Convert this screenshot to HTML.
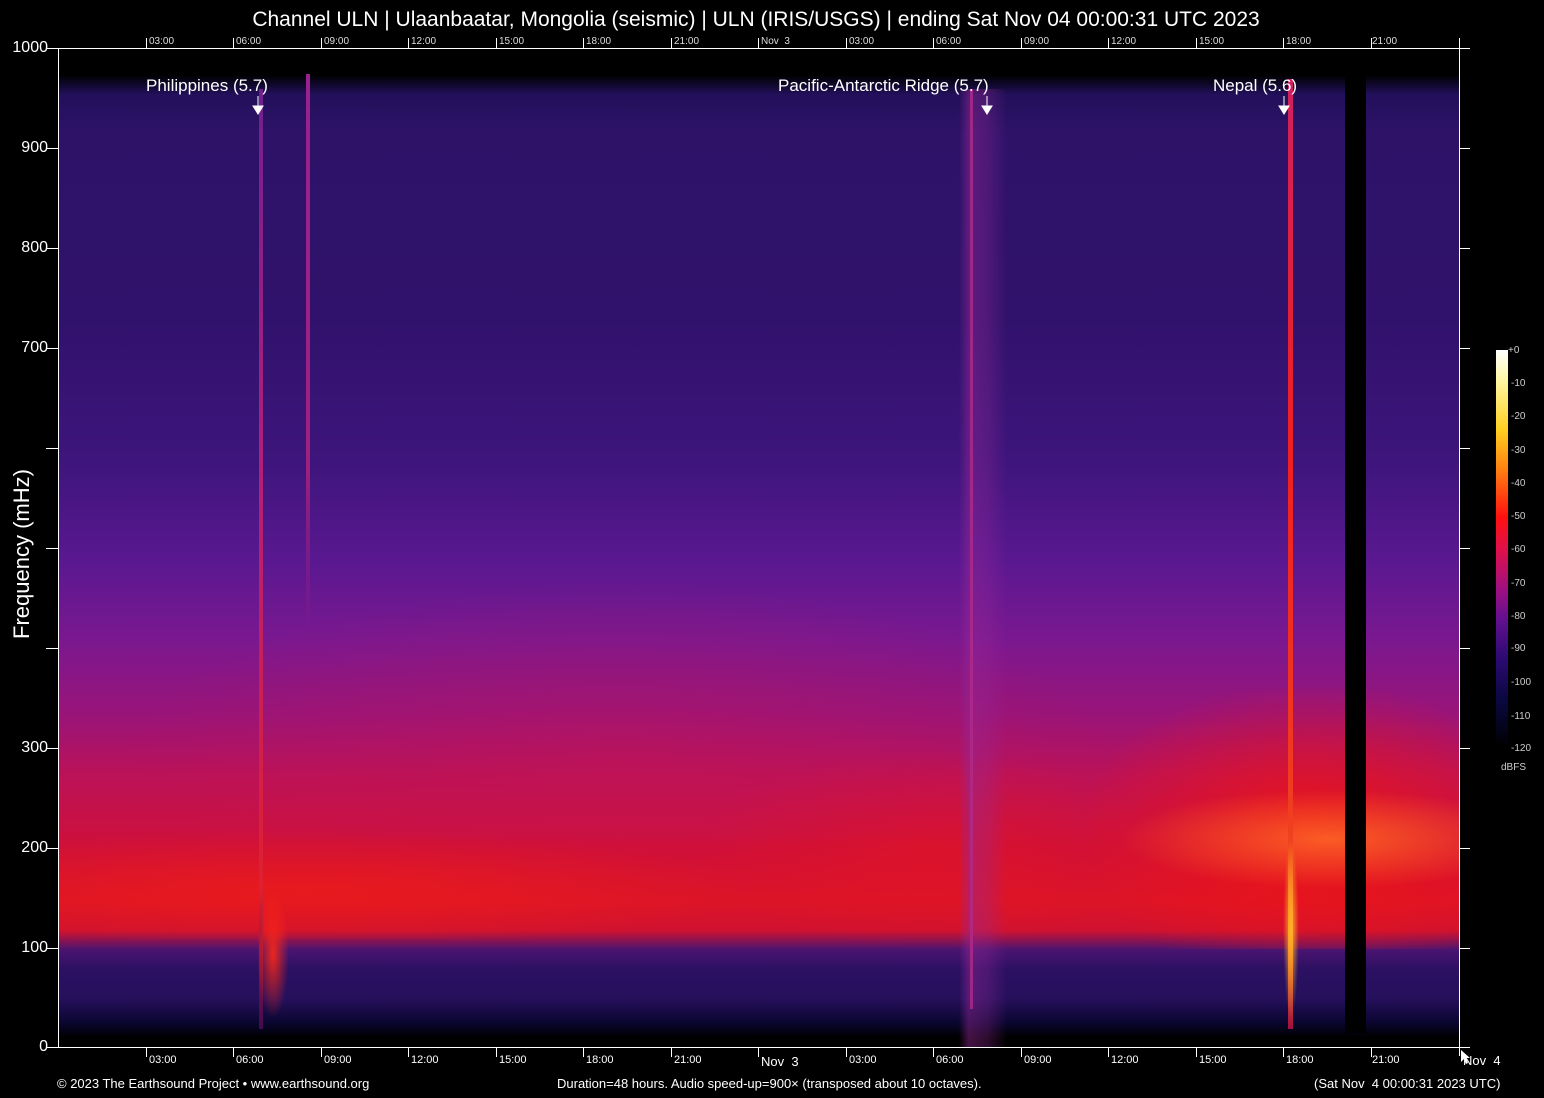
<!DOCTYPE html><html><head><meta charset="utf-8"><style>
body{margin:0;width:1544px;height:1098px;background:#000;position:relative;overflow:hidden;font-family:"Liberation Sans",sans-serif;color:#fff}
.a{position:absolute}
#plot{left:59px;top:49px;width:1400px;height:998px;background:#000;overflow:hidden}
.l{position:absolute;background:#fff}
.t{position:absolute;font-size:10px;color:#ddd}
.y{position:absolute;font-size:15px;right:1496px;text-align:right}
.ann{position:absolute;font-size:17px;white-space:nowrap}
.cb{position:absolute;font-size:10px;color:#ccc;left:1511px}
</style></head><body>
<div class="a" style="left:0;width:1512px;top:8px;text-align:center;font-size:21px;white-space:nowrap">Channel ULN | Ulaanbaatar, Mongolia (seismic) | ULN (IRIS/USGS) | ending Sat Nov 04 00:00:31 UTC 2023</div>
<div id="plot" class="a">
 <div class="a" style="left:0;top:26px;width:1400px;height:972px;background:linear-gradient(#000 0,#22105a 2%,#2e1268 6%,#30126c 25%,#3e157c 40%,#5a1890 50%,#7a1890 58%,#9a1478 66%,#bb1258 72%,#d01038 80%,#dc1428 85%,#d01230 88%,#4a1470 90%,#2c1062 92%,#26105c 95%,#0a0630 97.5%,#000 99%)"></div>
 <div class="a" style="left:0;top:780px;width:700px;height:110px;background:radial-gradient(ellipse at 35% 55%,rgba(240,30,20,.6),rgba(230,20,30,0) 70%)"></div>
 <div class="a" style="left:640px;top:700px;width:460px;height:200px;background:radial-gradient(ellipse at 50% 50%,rgba(230,20,30,.5),rgba(230,20,30,0) 70%)"></div>
 <div class="a" style="left:1030px;top:640px;width:370px;height:260px;background:radial-gradient(ellipse at 60% 55%,rgba(238,20,20,.9),rgba(230,20,30,0) 75%)"></div>
 <div class="a" style="left:1060px;top:740px;width:350px;height:100px;background:radial-gradient(ellipse at 60% 50%,rgba(255,110,40,.8),rgba(250,60,30,0) 70%)"></div>
 <div class="a" style="left:60px;top:530px;width:1000px;height:260px;background:radial-gradient(ellipse at 50% 70%,rgba(200,20,80,.35),rgba(200,20,80,0) 70%)"></div>
 <!-- streaks -->
 <div class="a" style="left:200px;top:40px;width:4px;height:940px;background:linear-gradient(#702090,#b0207a 40%,#e02030 85%,#400a50)"></div>
 <div class="a" style="left:198px;top:840px;width:32px;height:130px;background:radial-gradient(ellipse,rgba(255,40,20,.9),rgba(255,30,30,0) 70%)"></div>
 <div class="a" style="left:247px;top:25px;width:4px;height:560px;background:linear-gradient(#9a2090,#a02080 70%,rgba(150,30,120,0))"></div>
 <div class="a" style="left:900px;top:40px;width:48px;height:958px;background:linear-gradient(90deg,rgba(140,40,150,0),rgba(150,40,150,.45) 20%,rgba(150,40,150,.3) 60%,rgba(140,40,150,0));"></div>
 <div class="a" style="left:911px;top:40px;width:3px;height:920px;background:#b02a8a;opacity:.8"></div>
 <div class="a" style="left:1229px;top:30px;width:5px;height:950px;background:linear-gradient(#d02060,#f02020 40%,#f04020 80%,#ff9020 90%,#a01040)"></div>
 <div class="a" style="left:1224px;top:790px;width:16px;height:180px;background:radial-gradient(ellipse,rgba(255,180,40,.9),rgba(255,60,30,0) 70%)"></div>
 <div class="a" style="left:1286px;top:26px;width:21px;height:958px;background:#000"></div>
</div>
<!-- axes -->
<div class="l" style="left:58px;top:48px;width:1402px;height:1px"></div>
<div class="l" style="left:58px;top:1047px;width:1412px;height:1px"></div>
<div class="l" style="left:58px;top:48px;width:1px;height:1000px"></div>
<div class="l" style="left:1459px;top:38px;width:1px;height:1018px"></div>
<div id="ax"></div>
<div class="a" style="left:-78px;top:541px;width:200px;text-align:center;font-size:22px;white-space:nowrap;transform:rotate(-90deg)">Frequency (mHz)</div>
<div class="ann" style="left:146px;top:76px">Philippines (5.7)</div>
<div class="ann" style="left:778px;top:76px">Pacific-Antarctic Ridge (5.7)</div>
<div class="ann" style="left:1213px;top:76px">Nepal (5.6)</div>
<svg class="a" style="left:0;top:0" width="1544" height="1098"><g fill="#fff" stroke="#fff">
<line x1="258" y1="96" x2="258" y2="106"/><path d="M253 106h10l-5 8z"/>
<line x1="987" y1="96" x2="987" y2="106"/><path d="M982 106h10l-5 8z"/>
<line x1="1284" y1="96" x2="1284" y2="106"/><path d="M1279 106h10l-5 8z"/>
<path d="M1461 1050v12l3-3 2 5 2-1-2-5h4z" stroke="none"/></g></svg>
<div class="a" style="left:1496px;top:350px;width:12px;height:398px;background:linear-gradient(#fff 0%,#fff6a0 8%,#ffd020 20%,#ff8010 30%,#ff1010 42%,#e0104a 50%,#a01080 60%,#601090 68%,#2a0a70 78%,#0a0840 88%,#000 100%)"></div>
<div class="cb" style="top:345px;left:1508px">+0</div><div class="cb" style="top:378px">-10</div><div class="cb" style="top:411px">-20</div><div class="cb" style="top:445px">-30</div><div class="cb" style="top:478px">-40</div><div class="cb" style="top:511px">-50</div><div class="cb" style="top:544px">-60</div><div class="cb" style="top:578px">-70</div><div class="cb" style="top:611px">-80</div><div class="cb" style="top:643px">-90</div><div class="cb" style="top:677px">-100</div><div class="cb" style="top:711px">-110</div><div class="cb" style="top:743px">-120</div>
<div class="cb" style="top:762px;left:1501px">dBFS</div>
<div class="a" style="left:57px;top:1076px;font-size:13px;white-space:pre">© 2023 The Earthsound Project • www.earthsound.org</div>
<div class="a" style="left:557px;top:1076px;font-size:13px;white-space:pre">Duration=48 hours. Audio speed-up=900× (transposed about 10 octaves).</div>
<div class="a" style="left:1314px;top:1076px;font-size:13px;white-space:pre">(Sat Nov  4 00:00:31 2023 UTC)</div>
<script>
var h='';
var L=['03:00','06:00','09:00','12:00','15:00','18:00','21:00','Nov  3','03:00','06:00','09:00','12:00','15:00','18:00','',''];
for(var i=1;i<16;i++){var x=Math.round(58+i*87.5);
h+='<div class="l" style="left:'+x+'px;top:1047px;width:1px;height:10px"></div><div class="l" style="left:'+x+'px;top:38px;width:1px;height:10px"></div>';
var s=L[i-1];
if(s){var big=s.indexOf('Nov')>=0;h+='<div class="t" style="left:'+(x+3)+'px;top:1054px;font-size:'+(big?13:11)+'px;color:#fff;white-space:pre">'+s+'</div><div class="t" style="left:'+(x+3)+'px;top:36px;white-space:pre">'+s+'</div>';}}
h+='<div class="t" style="left:1372px;top:1054px;font-size:11px;color:#fff">21:00</div><div class="t" style="left:1372px;top:36px">21:00</div>';
h+='<div class="t" style="left:1463px;top:1053px;font-size:13px;color:#fff;white-space:pre">Nov  4</div>';
var yl={0:'1000',1:'900',2:'800',3:'700',7:'300',8:'200',9:'100',10:'0'};
for(var j=0;j<=10;j++){var y=48+j*100-(j==10?1:0);
h+='<div class="l" style="left:46px;top:'+y+'px;width:12px;height:1px"></div><div class="l" style="left:1459px;top:'+y+'px;width:11px;height:1px"></div>';
if(yl[j])h+='<div class="y" style="top:'+(y-9)+'px;font-size:16px">'+yl[j]+'</div>';}
document.getElementById('ax').innerHTML=h;
</script>
</body></html>
